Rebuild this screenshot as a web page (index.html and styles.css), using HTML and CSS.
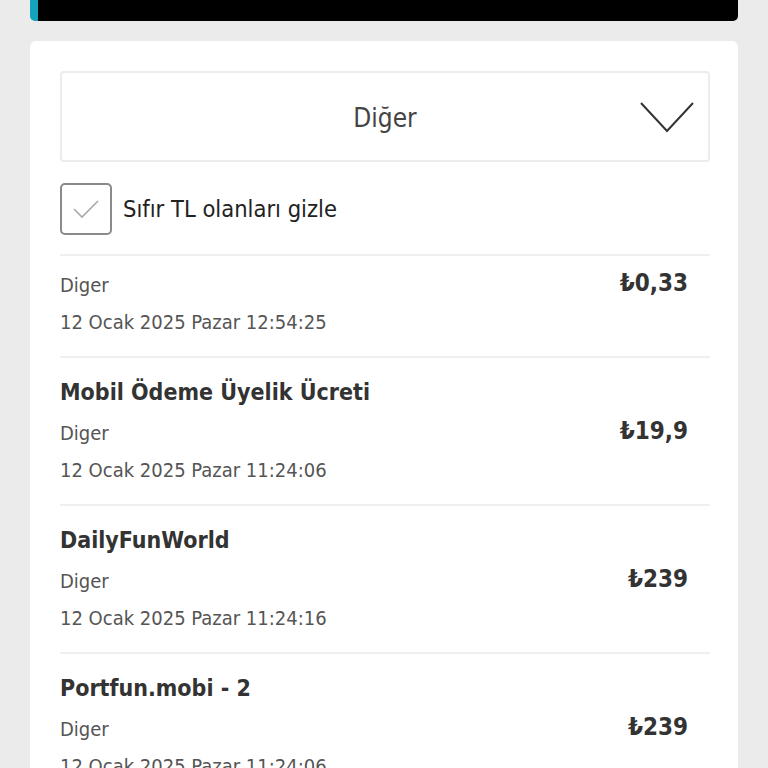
FILE: index.html
```html
<!DOCTYPE html>
<html lang="tr">

<head>
	<meta charset="UTF-8">
	<meta name="viewport" content="width=device-width, initial-scale=1.0">
	<title>Harcamalar</title>
	<link rel="stylesheet" href="styles.css">
</head>

<body>

	<div class="top-bar"></div>

	<div class="card">
		<div class="select">
			<span class="select-value">Diğer</span>
			<svg class="select-arrow" width="54" height="31" viewBox="0 0 54 31">
				<polyline points="1,1 27,29 53,1" fill="none" stroke="#333" stroke-width="2" />
			</svg>
		</div>

		<label class="check">
			<span class="check-box">
				<svg width="30" height="22" viewBox="0 0 30 22">
					<polyline points="3,11 11,19 27,3" fill="none" stroke="#aaa" stroke-width="1.6" />
				</svg>
			</span>
			<span class="check-label">Sıfır TL olanları gizle</span>
		</label>

		<ul class="list">
			<li class="item">
				<div class="item-line">
					<span class="item-type">Diger</span>
					<span class="item-amount">₺0,33</span>
				</div>
				<div class="item-date">12 Ocak 2025 Pazar 12:54:25</div>
			</li>
			<li class="item">
				<div class="item-title">Mobil Ödeme Üyelik Ücreti</div>
				<div class="item-line">
					<span class="item-type">Diger</span>
					<span class="item-amount">₺19,9</span>
				</div>
				<div class="item-date">12 Ocak 2025 Pazar 11:24:06</div>
			</li>
			<li class="item">
				<div class="item-title">DailyFunWorld</div>
				<div class="item-line">
					<span class="item-type">Diger</span>
					<span class="item-amount">₺239</span>
				</div>
				<div class="item-date">12 Ocak 2025 Pazar 11:24:16</div>
			</li>
			<li class="item">
				<div class="item-title">Portfun.mobi - 2</div>
				<div class="item-line">
					<span class="item-type">Diger</span>
					<span class="item-amount">₺239</span>
				</div>
				<div class="item-date">12 Ocak 2025 Pazar 11:24:06</div>
			</li>
		</ul>
	</div>

</body>

</html>
```

FILE: styles.css
```css
*,
*::before,
*::after {
	box-sizing: border-box;
}

body {
	margin: 0;
	padding: 0 30px;
	font-family: "DejaVu Sans Condensed", sans-serif;
	background-color: #ebebeb;
	color: #333;
	overflow: hidden;
}

.top-bar {
	height: 21px;
	background-color: black;
	border-left: 8px solid #13a3bd;
	border-radius: 0 0 5px 5px;
}

.card {
	margin-top: 20px;
	padding: 30px 28px 0 30px;
	background-color: white;
	border-radius: 6px;
	min-height: 800px;
}

.select {
	position: relative;
	height: 91px;
	display: flex;
	align-items: center;
	justify-content: center;
	padding-top: 3px;
	border: 2px solid #ececec;
	border-radius: 4px;
}

.select-value {
	font-size: 26px;
	color: #444;
}

.select-arrow {
	position: absolute;
	right: 14px;
	top: 29px;
}

.check {
	display: flex;
	align-items: center;
	gap: 11px;
	margin-top: 21px;
	padding-bottom: 19px;
	border-bottom: 2px solid #efefef;
}

.check-box {
	width: 52px;
	height: 52px;
	display: flex;
	align-items: center;
	justify-content: center;
	border: 2px solid #8a8a8a;
	border-radius: 5px;
}

.check-label {
	font-size: 23.5px;
	color: #222;
}

.list {
	list-style: none;
	margin: 0;
	padding: 0;
}

.item {
	padding: 11px 22px 15px 0;
	border-bottom: 2px solid #efefef;
	line-height: 37px;
	font-size: 20px;
}

.item-title {
	font-size: 23px;
	font-weight: bold;
	line-height: 46px;
	color: #333;
}

.item-line {
	display: flex;
	justify-content: space-between;
	align-items: center;
}

.item-type,
.item-date {
	color: #555;
}

.item-amount {
	font-size: 24px;
	font-weight: bold;
	color: #333;
	margin-top: -4px;
}
```
